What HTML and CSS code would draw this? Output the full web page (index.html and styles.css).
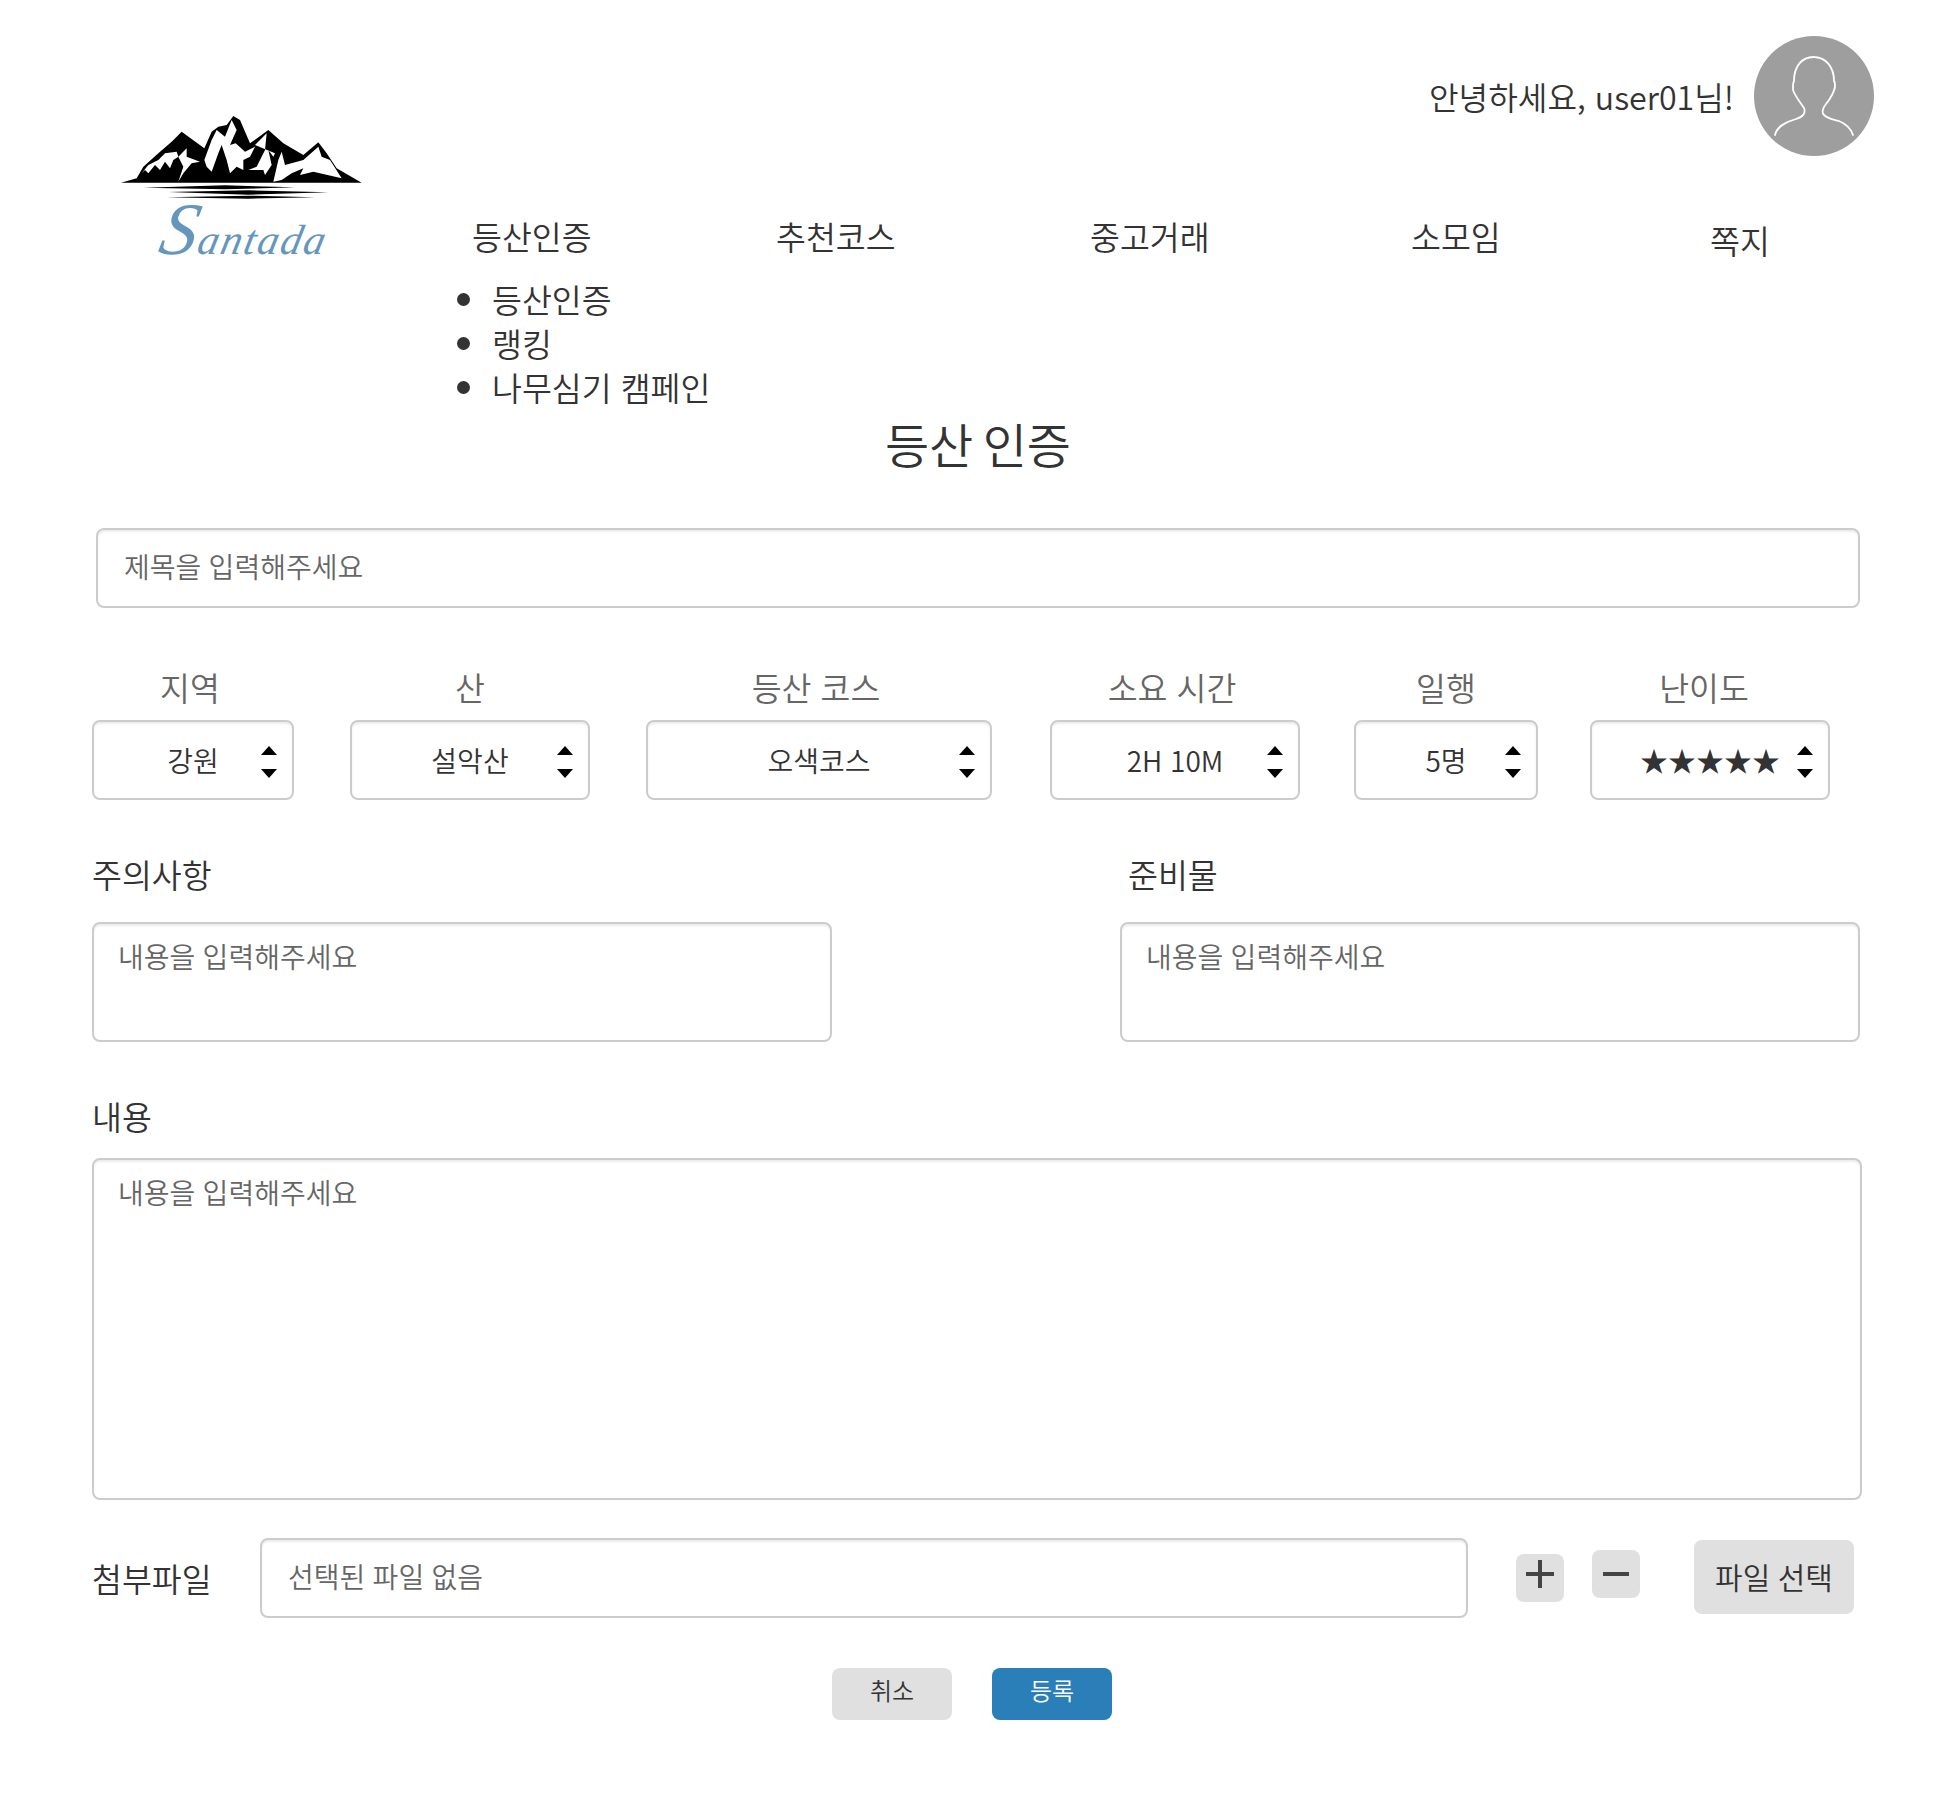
FILE: index.html
```html
<!DOCTYPE html>
<html lang="ko">
<head>
<meta charset="utf-8">
<title>등산 인증</title>
<link rel="stylesheet" href="styles.css">
</head>
<body>
<header class="header">
  <a class="logo">
    <svg class="logo-art" viewBox="0 0 750 270" aria-hidden="true">
      <path fill="#000" d="M18 218L65 205L85 170L130 130L170 95L200 65L268 115L290 65L310 50L335 45L355 18L375 30L405 100L460 60L505 100L565 135L610 97L635 130L665 175L740 218Z"/>
      <path fill="#fff" d="M80 190L100 165L130 150L150 130L185 125L190 140L215 115L215 140L255 155L230 160L205 190L190 215L205 170L190 140L175 150L165 175L150 155L135 180L120 165L100 190L90 180Z"/>
      <path fill="#fff" d="M268 150L290 90L305 60L330 80L350 30L365 60L345 105L362 100L390 125L420 110L405 140L385 150L385 180L365 170L345 190L335 150L320 105L310 130L290 185L275 170Z"/>
      <path fill="#fff" d="M420 105L455 70L450 120L425 170L400 180L445 180L450 195L470 165L460 120L475 140L480 130Z"/>
      <path fill="#fff" d="M475 215L490 150L500 125L510 165L565 150L610 110L620 140L645 150L680 205L595 185L555 195L565 175L530 190L500 210Z"/>
      <path fill="#000" d="M85 233L330 226L540 232L330 238Z"/>
      <path fill="#000" d="M160 246L400 241L640 247L400 254Z"/>
      <path fill="#000" d="M155 262L400 257L600 262L400 266Z"/>
    </svg>
    <span class="logo-word">Santada</span>
  </a>
  <div class="header-main">
    <div class="user">
      <span class="greeting">안녕하세요, user01님!</span>
      <svg class="avatar" viewBox="0 0 120 120" aria-hidden="true">
        <circle cx="60" cy="60" r="60" fill="#9e9e9e"/>
        <path fill="none" stroke="#fff" stroke-width="1.8" stroke-linecap="round" d="M21 99C23 90 32 86 42 83C49 81 52 77 50 72C46 66 41 60 39 54L39 50C39 47 39.5 46 40 45C40 30 48 21 59.5 21C71 21 80 30 80 45C81 46 81 48 81 50C81 54 77 62 72 68C69 72 67 76 70 79C74 83 78 83 85 85C92 88 97 92 99 99"/>
      </svg>
    </div>
    <nav class="nav">
      <a>등산인증</a>
      <a>추천코스</a>
      <a>중고거래</a>
      <a>소모임</a>
      <a class="nav-last">쪽지</a>
    </nav>
    <ul class="submenu">
      <li>등산인증</li>
      <li>랭킹</li>
      <li>나무심기 캠페인</li>
    </ul>
  </div>
</header>

<main class="content">
  <h1 class="title">등산 인증</h1>
  <form class="form">
    <input class="field field-title" placeholder="제목을 입력해주세요">

    <div class="selects">
      <div class="pick pick-region"><span class="pick-label">지역</span><div class="box">강원<svg class="spin" viewBox="0 0 16 32"><path d="M8 0L16 9H0Z"/><path d="M0 23H16L8 32Z"/></svg></div></div>
      <div class="pick pick-mountain"><span class="pick-label">산</span><div class="box">설악산<svg class="spin" viewBox="0 0 16 32"><path d="M8 0L16 9H0Z"/><path d="M0 23H16L8 32Z"/></svg></div></div>
      <div class="pick pick-course"><span class="pick-label">등산 코스</span><div class="box">오색코스<svg class="spin" viewBox="0 0 16 32"><path d="M8 0L16 9H0Z"/><path d="M0 23H16L8 32Z"/></svg></div></div>
      <div class="pick pick-time"><span class="pick-label">소요 시간</span><div class="box">2H 10M<svg class="spin" viewBox="0 0 16 32"><path d="M8 0L16 9H0Z"/><path d="M0 23H16L8 32Z"/></svg></div></div>
      <div class="pick pick-party"><span class="pick-label">일행</span><div class="box">5명<svg class="spin" viewBox="0 0 16 32"><path d="M8 0L16 9H0Z"/><path d="M0 23H16L8 32Z"/></svg></div></div>
      <div class="pick pick-level"><span class="pick-label">난이도</span><div class="box">★★★★★<svg class="spin" viewBox="0 0 16 32"><path d="M8 0L16 9H0Z"/><path d="M0 23H16L8 32Z"/></svg></div></div>
    </div>

    <div class="notes">
      <div class="note">
        <label class="label">주의사항</label>
        <textarea class="field area-small" placeholder="내용을 입력해주세요"></textarea>
      </div>
      <div class="note">
        <label class="label label-indent">준비물</label>
        <textarea class="field area-small" placeholder="내용을 입력해주세요"></textarea>
      </div>
    </div>

    <label class="label label-body">내용</label>
    <textarea class="field area-large" placeholder="내용을 입력해주세요"></textarea>

    <div class="attach">
      <label class="label attach-label">첨부파일</label>
      <input class="field attach-input" placeholder="선택된 파일 없음">
      <button type="button" class="btn-icon btn-plus"><svg viewBox="0 0 28 28"><path d="M14 0V28M0 14H28"/></svg></button>
      <button type="button" class="btn-icon btn-minus"><svg viewBox="0 0 28 28"><path d="M1 14H27"/></svg></button>
      <button type="button" class="btn btn-file">파일 선택</button>
    </div>

    <div class="actions">
      <button type="button" class="btn btn-action">취소</button>
      <button type="button" class="btn btn-action btn-primary">등록</button>
    </div>
  </form>
</main>
</body>
</html>
```

FILE: styles.css
```css
* { box-sizing: border-box; }

body {
  margin: 0;
  background: #fff;
  color: #333;
  font-family: "Noto Sans CJK KR", "Noto Sans", sans-serif;
  font-weight: 350;
  font-size: 32.5px;
}

.header {
  display: flex;
  height: 411px;
}

.logo {
  display: block;
  width: 364px;
  flex: none;
  padding: 110px 0 0 115px;
}

.logo-art {
  display: block;
  width: 250px;
  height: 90px;
}

.logo-word {
  display: block;
  width: 190px;
  margin: -1px 0 0 46px;
  color: #6596be;
  font-family: "Liberation Serif", serif;
  font-style: italic;
  font-size: 42px;
  line-height: 60px;
  letter-spacing: 2px;
  transform: skewX(-12deg);
}

.logo-word::first-letter {
  font-size: 74px;
}

.header-main {
  flex: 1;
  min-width: 0;
}

.user {
  display: flex;
  justify-content: flex-end;
  align-items: center;
  gap: 20px;
  padding: 36px 82px 0 0;
}

.greeting {
  font-size: 32.2px;
  line-height: 48px;
}

.avatar {
  display: block;
  width: 120px;
  height: 120px;
}

.nav {
  display: grid;
  grid-template-columns: 304px 314px 321px 299px auto;
  margin: 57px 0 0 108px;
  line-height: 46px;
}

.nav-last { margin-top: 4px; }

.submenu {
  margin: 14px 0 0 128px;
  padding: 0;
  list-style: none;
  line-height: 44px;
}

.submenu li { position: relative; }

.submenu li::before {
  content: "";
  position: absolute;
  left: -35px;
  top: 16px;
  width: 13px;
  height: 13px;
  border-radius: 50%;
  background: #333;
}

.title {
  margin: 0;
  text-align: center;
  font-size: 48px;
  font-weight: 350;
  line-height: 64px;
  word-spacing: -4px;
}

.form {
  padding: 53px 0 0 92px;
}

.field {
  display: block;
  border: 2px solid #ccc;
  border-radius: 8px;
  background: #fff;
  box-shadow: inset 0 2px 2px rgba(0, 0, 0, .075);
  color: #333;
  font-family: inherit;
  font-weight: 350;
  font-size: 28px;
  word-spacing: -.5px;
  outline: none;
  resize: none;
}

.field::placeholder { color: #666; opacity: 1; }

.field-title {
  width: 1764px;
  height: 80px;
  margin-left: 4px;
  padding: 0 26px 5px;
}

.selects {
  display: flex;
  margin-top: 50px;
}

.pick {
  display: flex;
  flex-direction: column;
  align-items: center;
  flex: none;
}

.pick-region { width: 202px; }
.pick-mountain { width: 240px; margin-left: 56px; }
.pick-course { width: 346px; margin-left: 56px; }
.pick-time { width: 250px; margin-left: 58px; }
.pick-party { width: 184px; margin-left: 54px; }
.pick-level { width: 240px; margin-left: 52px; }

.pick-label {
  color: #666;
  line-height: 58px;
  padding-bottom: 4px;
}

.pick-region .pick-label,
.pick-course .pick-label,
.pick-time .pick-label { margin-right: 6px; }
.pick-level .pick-label { margin-right: 12px; }

.box {
  position: relative;
  width: 100%;
  height: 80px;
  border: 2px solid #ccc;
  border-radius: 8px;
  box-shadow: inset 0 2px 2px rgba(0, 0, 0, .075);
  text-align: center;
  font-size: 28px;
  line-height: 76px;
}

.spin {
  position: absolute;
  top: 24px;
  right: 15px;
  width: 16px;
  height: 32px;
  fill: #000;
}

.notes {
  display: flex;
  gap: 288px;
  margin-top: 52px;
}

.note { width: 740px; }

.label {
  display: block;
  line-height: 44px;
  padding-bottom: 2px;
}

.label-indent { margin-left: 8px; }

.area-small {
  width: 740px;
  height: 120px;
  margin-top: 24px;
  padding: 14px 24px;
  line-height: 36px;
}

.label-body { margin-top: 52px; }

.area-large {
  width: 1770px;
  height: 342px;
  margin-top: 18px;
  padding: 14px 24px;
  line-height: 36px;
}

.attach {
  display: flex;
  align-items: flex-start;
  margin-top: 38px;
}

.attach-label {
  width: 168px;
  flex: none;
  margin-top: 18px;
}

.attach-input {
  width: 1208px;
  height: 80px;
  flex: none;
  padding: 0 26px 5px;
}

.btn-icon {
  width: 48px;
  height: 48px;
  flex: none;
  padding: 10px;
  border: 0;
  border-radius: 8px;
  background: #e0e0e0;
}

.btn-icon svg {
  display: block;
  width: 28px;
  height: 28px;
  fill: none;
  stroke: #444;
  stroke-width: 4;
}

.btn-plus {
  margin: 16px 0 0 48px;
  padding: 6px 10px 14px;
}

.btn-minus { margin: 12px 0 0 28px; }

.btn {
  border: 0;
  border-radius: 8px;
  background: #e0e0e0;
  color: #333;
  font-family: inherit;
  font-weight: 350;
}

.btn-file {
  width: 160px;
  height: 74px;
  flex: none;
  margin: 2px 0 0 54px;
  padding: 0 0 2px;
  font-size: 30px;
  word-spacing: -1px;
}

.actions {
  display: flex;
  justify-content: center;
  gap: 40px;
  margin: 50px 0 0 -104px;
}

.btn-action {
  width: 120px;
  height: 52px;
  padding: 0 0 10px;
  font-size: 24px;
}

.btn-primary {
  background: #2a7fb8;
  color: #fff;
}
```
